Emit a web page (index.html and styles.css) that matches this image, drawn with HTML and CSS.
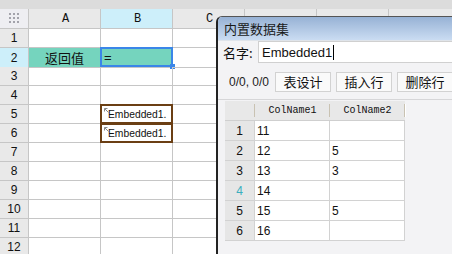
FILE: index.html
```html
<!DOCTYPE html>
<html>
<head>
<meta charset="utf-8">
<link rel="stylesheet" href="styles.css">
</head>
<body>
<div class="sheet">
  <div class="topbar"></div>
  <div class="row hdr">
    <div class="cell corner"><svg width="11" height="11" viewBox="0 0 11 11"><g fill="#a3a3ab"><rect x="0" y="0" width="2" height="2"/><rect x="4" y="0" width="2" height="2"/><rect x="8" y="0" width="2" height="2"/><rect x="0" y="4" width="2" height="2"/><rect x="4" y="4" width="2" height="2"/><rect x="8" y="4" width="2" height="2"/><rect x="0" y="8" width="2" height="2"/><rect x="4" y="8" width="2" height="2"/><rect x="8" y="8" width="2" height="2"/></g></svg></div>
    <div class="cell ch">A</div>
    <div class="cell ch selh">B</div>
    <div class="cell ch">C</div>
    <div class="cell ch"></div>
    <div class="cell ch"></div>
    <div class="cell ch"></div>
  </div>
  <div class="row"><div class="cell rh">1</div><div class="cell"></div><div class="cell"></div><div class="cell"></div><div class="cell"></div><div class="cell"></div><div class="cell"></div></div>
  <div class="row"><div class="cell rh selh">2</div><div class="cell teal center">返回值</div><div class="cell teal">=<span class="selbox"></span><span class="handle"></span></div><div class="cell"></div><div class="cell"></div><div class="cell"></div><div class="cell"></div></div>
  <div class="row"><div class="cell rh">3</div><div class="cell"></div><div class="cell"></div><div class="cell"></div><div class="cell"></div><div class="cell"></div><div class="cell"></div></div>
  <div class="row"><div class="cell rh">4</div><div class="cell"></div><div class="cell"></div><div class="cell"></div><div class="cell"></div><div class="cell"></div><div class="cell"></div></div>
  <div class="row"><div class="cell rh">5</div><div class="cell"></div><div class="cell emb"><span class="frame"></span><svg class="arr" width="5" height="5" viewBox="0 0 5 5"><path d="M4.5 4.5L0.8 0.8M0.5 0.5h3M0.5 0.5v3" stroke="#8a8a8a" stroke-width="1" fill="none"/></svg>Embedded1.</div><div class="cell"></div><div class="cell"></div><div class="cell"></div><div class="cell"></div></div>
  <div class="row"><div class="cell rh">6</div><div class="cell"></div><div class="cell emb"><span class="frame"></span><svg class="arr" width="5" height="5" viewBox="0 0 5 5"><path d="M4.5 4.5L0.8 0.8M0.5 0.5h3M0.5 0.5v3" stroke="#8a8a8a" stroke-width="1" fill="none"/></svg>Embedded1.</div><div class="cell"></div><div class="cell"></div><div class="cell"></div><div class="cell"></div></div>
  <div class="row"><div class="cell rh">7</div><div class="cell"></div><div class="cell"></div><div class="cell"></div><div class="cell"></div><div class="cell"></div><div class="cell"></div></div>
  <div class="row"><div class="cell rh">8</div><div class="cell"></div><div class="cell"></div><div class="cell"></div><div class="cell"></div><div class="cell"></div><div class="cell"></div></div>
  <div class="row"><div class="cell rh">9</div><div class="cell"></div><div class="cell"></div><div class="cell"></div><div class="cell"></div><div class="cell"></div><div class="cell"></div></div>
  <div class="row"><div class="cell rh">10</div><div class="cell"></div><div class="cell"></div><div class="cell"></div><div class="cell"></div><div class="cell"></div><div class="cell"></div></div>
  <div class="row"><div class="cell rh">11</div><div class="cell"></div><div class="cell"></div><div class="cell"></div><div class="cell"></div><div class="cell"></div><div class="cell"></div></div>
  <div class="row"><div class="cell rh">12</div><div class="cell"></div><div class="cell"></div><div class="cell"></div><div class="cell"></div><div class="cell"></div><div class="cell"></div></div>
</div>

<div class="dlg">
  <div class="title">内置数据集</div>
  <div class="namerow">
    <span class="lbl">名字:</span>
    <div class="input"><span class="val">Embedded1</span></div>
  </div>
  <div class="toolbar">
    <span class="pos">0/0, 0/0</span>
    <button class="btn">表设计</button>
    <button class="btn">插入行</button>
    <button class="btn">删除行</button>
  </div>
  <div class="sep"></div>
  <div class="tbl">
    <div class="th num"></div><div class="th">ColName1</div><div class="th">ColName2</div>
    <div class="rn">1</div><div class="td">11</div><div class="td"></div>
    <div class="rn">2</div><div class="td">12</div><div class="td">5</div>
    <div class="rn">3</div><div class="td">13</div><div class="td">3</div>
    <div class="rn cur">4</div><div class="td">14</div><div class="td"></div>
    <div class="rn">5</div><div class="td">15</div><div class="td">5</div>
    <div class="rn">6</div><div class="td">16</div><div class="td"></div>
  </div>
</div>
</body>
</html>
```

FILE: styles.css
```css
html, body {
  margin: 0;
  padding: 0;
}
body {
  width: 452px;
  height: 254px;
  overflow: hidden;
  position: relative;
  background: #ffffff;
  font-family: "Liberation Sans", "Noto Sans CJK SC", sans-serif;
  color: #111;
}
.topbar {
  height: 9px;
  background: #dcdcdc;
}
.row {
  display: grid;
  grid-template-columns: 29px repeat(6, 72px);
  height: 19px;
}
.row.hdr {
  height: 20px;
}
.cell {
  box-sizing: border-box;
  border-right: 1px solid #c6c6c6;
  border-bottom: 1px solid #c6c6c6;
  display: flex;
  align-items: center;
  font-size: 12px;
  position: relative;
  white-space: nowrap;
}
.corner {
  background: #eeeef2;
  justify-content: center;
}
.ch {
  background: #e9e9e9;
  justify-content: center;
  font-family: "Liberation Mono", monospace;
  font-size: 12px;
  padding-left: 2px;
}
.rh {
  background: #e9e9e9;
  justify-content: center;
  font-size: 12px;
}
.selh {
  background: #cdeffa;
}
.teal {
  background: #75d4be;
  padding-left: 3px;
  font-size: 13px;
}
.teal.center {
  justify-content: center;
  padding-left: 0;
  font-family: "Noto Sans CJK SC", sans-serif;
  font-size: 13px;
}
.selbox {
  position: absolute;
  left: -1px;
  top: -1px;
  width: 73px;
  height: 20px;
  box-sizing: border-box;
  border: 2px solid #3a86e8;
}
.handle {
  position: absolute;
  left: 69px;
  top: 16px;
  width: 5px;
  height: 5px;
  background: #3a86e8;
}
.emb {
  padding-left: 7px;
  font-size: 10.3px;
}
.frame {
  position: absolute;
  left: -1px;
  top: -1px;
  width: 73px;
  height: 20px;
  box-sizing: border-box;
  border: 2px solid #6b3f14;
}
.arr {
  position: absolute;
  left: 3px;
  top: 3px;
}
.dlg {
  position: absolute;
  left: 216px;
  top: 16px;
  width: 245px;
  height: 250px;
  box-sizing: border-box;
  background: #f3f3f5;
  border-left: 2px solid #222;
  border-top: 1px solid #555;
  border-radius: 6px 0 0 0;
  overflow: hidden;
}
.title {
  height: 23px;
  line-height: 23px;
  padding-left: 6px;
  background: linear-gradient(#97b2d5, #cadcf2);
  font-size: 13px;
  font-family: "Noto Sans CJK SC", sans-serif;
  color: #1a1a1a;
  border-bottom: 1px solid #dfe4ea;
}
.namerow {
  display: flex;
  align-items: center;
  height: 22px;
  padding-left: 5px;
}
.lbl {
  width: 35px;
  font-size: 13px;
  font-family: "Noto Sans CJK SC", sans-serif;
}
.input {
  flex: 1;
  height: 22px;
  box-sizing: border-box;
  background: #fff;
  border: 1px solid #d0d0d0;
  display: flex;
  align-items: center;
  padding-left: 3px;
}
.val {
  font-size: 13px;
  padding-right: 1px;
  border-right: 1px solid #000;
  line-height: 15px;
}
.toolbar {
  display: flex;
  align-items: center;
  height: 20px;
  margin-top: 9px;
  padding-left: 11px;
}
.pos {
  font-size: 12px;
  color: #222;
  margin-right: 6px;
}
.btn {
  height: 20px;
  width: 56px;
  margin: 0 5px 0 0;
  padding: 0;
  box-sizing: border-box;
  background: #fafafa;
  border: 1px solid #d2d2d2;
  font-size: 13px;
  font-family: "Noto Sans CJK SC", sans-serif;
  color: #111;
  line-height: 18px;
}
.sep {
  margin-top: 7px;
  height: 1px;
  background: #d6d6d8;
}
.tbl {
  margin: 1px 0 0 7px;
  display: grid;
  grid-template-columns: 30px 75px 75px;
  grid-auto-rows: 20px;
  width: 180px;
}
.th {
  background: #e8e8e8;
  border-bottom: 1px solid #cfcfcf;
  box-sizing: border-box;
  font-family: "Liberation Mono", monospace;
  font-size: 10px;
  display: flex;
  align-items: center;
  justify-content: center;
  position: relative;
  color: #111;
}
.th::after {
  content: "";
  position: absolute;
  right: 0;
  top: 3px;
  height: 13px;
  width: 1px;
  background: #c9c2b2;
  box-shadow: 1px 0 0 #fff;
}
.rn {
  background: #e6e6e6;
  box-sizing: border-box;
  border-right: 1px solid #d2d2d2;
  border-bottom: 1px solid #d2d2d2;
  display: flex;
  align-items: center;
  justify-content: center;
  font-size: 12px;
}
.rn.cur {
  color: #3aaebe;
}
.td {
  background: #fff;
  box-sizing: border-box;
  border-right: 1px solid #d2d2d2;
  border-bottom: 1px solid #d2d2d2;
  display: flex;
  align-items: center;
  padding-left: 2px;
  font-size: 12px;
}
```
